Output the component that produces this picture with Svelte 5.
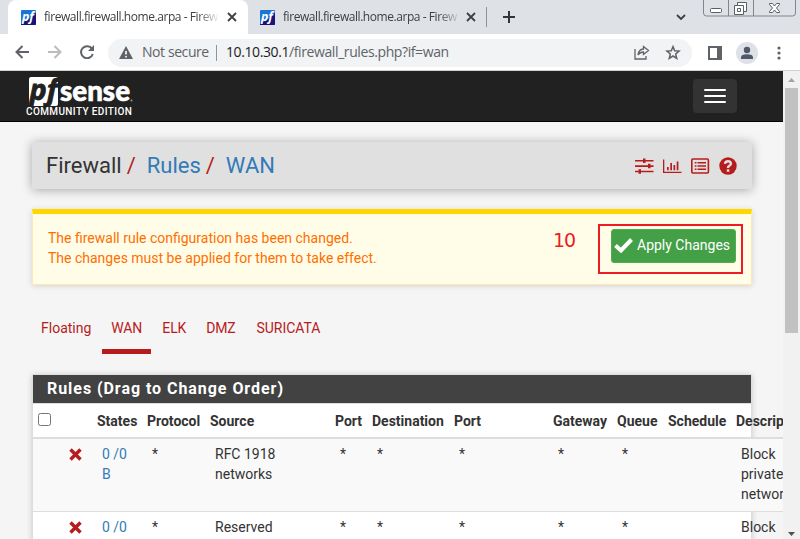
<script>
  const columns = ['', '', 'States', 'Protocol', 'Source', 'Port', 'Destination', 'Port', 'Gateway', 'Queue', 'Schedule', 'Description'];
  const rows = [
    { source: 'RFC 1918 networks', description: 'Block private networks' },
    { source: 'Reserved', description: 'Block' }
  ];
  const menu = ['Floating', 'WAN', 'ELK', 'DMZ', 'SURICATA'];
</script>

{#snippet favicon()}
  <svg class="favicon" width="15" height="15" viewBox="0 0 15 15">
    <rect width="15" height="15" rx="1" fill="#1976d2" />
    <path d="M0 13 8 9 15 3V14q0 1-1 1H0z" fill="#17147b" />
    <text x="1" y="11" textLength="12" lengthAdjust="spacingAndGlyphs">pf</text>
  </svg>
{/snippet}

{#snippet cross()}
  <svg width="10" height="10" viewBox="0 0 10 10"><path d="M1 1l8 8M9 1L1 9" stroke="currentColor" stroke-width="1.8" fill="none" /></svg>
{/snippet}

<div class="window">
  <header class="tabs">
    <div class="tab active">
      {@render favicon()}
      <span class="title">firewall.firewall.home.arpa - Firew</span>
      {@render cross()}
    </div>
    <div class="tab second">
      {@render favicon()}
      <span class="title">firewall.firewall.home.arpa - Firew</span>
      {@render cross()}
    </div>
    <i class="divider"></i>
    <svg class="plus" width="12" height="12" viewBox="0 0 12 12"><path d="M6 0v12M0 6h12" stroke="#333639" stroke-width="2" /></svg>
    <svg class="chevron" width="10" height="7" viewBox="0 0 10 7"><path d="M1 1l4 4 4-4" fill="none" stroke="#3c4043" stroke-width="1.8" /></svg>
    <svg class="controls" width="94" height="17" viewBox="0 0 94 17" fill="none" stroke="#80868b">
      <path d="M.5 0v13q0 3 3 3h86q3 0 3-3V0M25.500 0v16M50.500 0v16" />
      <g stroke="#5b5e62">
        <rect x="7.500" y="8.500" width="11" height="4" rx="1" fill="#fff" />
        <path d="M34.500 5V2.500h9v9H41M31.500 5.500h9v9h-9zM34.500 8.500h3v3h-3z" fill="#fff" />
        <path d="M66.500 3.500h3l2 2.500 2-2.500h3v1L73.500 8l3 3.500v1h-3l-2-2.500-2 2.500h-3v-1l3-3.500-3-3.500z" fill="#fff" />
      </g>
    </svg>
  </header>

  <div class="toolbar">
    <svg width="15" height="14" viewBox="0 0 15 14"><path d="M14 7H2M7.500 1l-6 6 6 6" fill="none" stroke="#5f6368" stroke-width="2" /></svg>
    <svg class="forward" width="15" height="14" viewBox="0 0 15 14"><path d="M1 7h12M7.500 1l6 6-6 6" fill="none" stroke="#babcbe" stroke-width="2" /></svg>
    <svg class="reload" width="14" height="14" viewBox="0 0 14 14"><path d="M12 3.700A6 6 0 1 0 12.800 9" fill="none" stroke="#5f6368" stroke-width="2" /><path d="M14 0v6H8z" fill="#5f6368" /></svg>
    <div class="omnibox">
      <svg width="14" height="13" viewBox="0 0 14 13"><path d="M7 0l7 13H0z" fill="#5f6368" /><path d="M6.200 5h1.600v3.600H6.200zM6.200 10h1.600v1.500H6.200z" fill="#fff" /></svg>
      <span class="secure">Not secure</span>
      <i></i>
      <span class="url"><b>10.10.30.1</b>/firewall_rules.php?if=wan</span>
      <svg class="share" width="16" height="15" viewBox="0 0 16 15" fill="none" stroke="#5f6368" stroke-width="1.300"><path d="M1 4v10h11v-3M9.500 1.500l5 4-5 4V7Q6 7 4 10q.5-5.500 5.500-6z" /></svg>
      <svg width="16" height="15" viewBox="0 0 16 15"><path d="M8 1.600l1.700 4.100 4.400.4-3.400 2.900 1 4.300L8 11l-3.700 2.300 1-4.300-3.400-2.900 4.400-.4z" fill="none" stroke="#5f6368" stroke-width="1.500" /></svg>
    </div>
    <svg class="panelicon" width="14" height="14" viewBox="0 0 14 14"><path d="M0 0h14v14H0zM2 2v10h7V2z" fill="#5f6368" fill-rule="evenodd" /></svg>
    <svg class="avatar" width="22" height="22" viewBox="0 0 22 22"><circle cx="11" cy="11" r="11" fill="#dee1e6" /><circle cx="11" cy="8" r="3.200" fill="#50586b" /><path d="M5 17v-1.500Q5 12.300 11 12.300t6 3.200V17z" fill="#50586b" /></svg>
    <svg class="dots" width="4" height="14" viewBox="0 0 4 14" fill="#5f6368"><circle cx="2" cy="2" r="1.600" /><circle cx="2" cy="7" r="1.600" /><circle cx="2" cy="12" r="1.600" /></svg>
  </div>

  <div class="viewport">
    <div class="page">
      <nav>
        <div class="brand">
          <svg width="106" height="30" viewBox="0 0 106 30">
            <path d="M4 0h25q2 0 2 2v25q0 2-2 2H4.500Q2 29 2 27V2q0-2 2-2z" fill="#fff" />
            <text class="pf" x="2.500" y="23" textLength="28" lengthAdjust="spacingAndGlyphs">pf</text>
            <text class="sense" x="33" y="23.500" textLength="70" lengthAdjust="spacingAndGlyphs">sense</text>
            <circle cx="104.500" cy="23.500" r="1" fill="#999" />
          </svg>
          <span>COMMUNITY EDITION</span>
        </div>
        <button class="menu" aria-label="Menu"><i></i><i></i><i></i></button>
      </nav>

      <main>
        <section class="crumbs">
          <h1>Firewall<em>/</em><a href="#rules">Rules</a><em>/</em><a href="#wan">WAN</a></h1>
          <div class="actions">
            <svg width="19" height="18" viewBox="0 0 19 18" fill="#b71c1c"><path d="M0 3h18.500v1.500H0zM0 8.200h18.500v1.700H0zM0 13.700h18.500v1.600H0zM8 1.500h2.500v4.500H8zM13 6.800h2.500v4.500H13zM3.500 12.200H6v4.500H3.500z" /></svg>
            <svg width="19" height="18" viewBox="0 0 19 18" fill="#b71c1c"><path d="M0 2.500h1.300v12.200H18.500V16H0zM4 10h1.700v3.300H4zM7.300 6h1.700v7.300H7.300zM10.500 8h1.700v5.300h-1.700zM13.700 4.500h1.700v8.800h-1.700z" /></svg>
            <svg width="19" height="18" viewBox="0 0 19 18"><rect x=".8" y="2" width="16.600" height="14" rx="1" fill="none" stroke="#b71c1c" stroke-width="1.600" /><path d="M3.700 5h1.800v1.500H3.700zM6.500 5H15v1.500H6.500zM3.700 8.300h1.800v1.500H3.700zM6.500 8.300H15v1.500H6.500zM3.700 11.500h1.800V13H3.700zM6.500 11.500H15V13H6.500z" fill="#b71c1c" /></svg>
            <svg width="18" height="18" viewBox="0 0 18 18"><circle cx="9" cy="9" r="8.700" fill="#b71c1c" /><path d="M5.800 6.700Q6.500 4.200 9 4.200t2.900 2.300Q11.900 8 10.300 8.800 9 9.500 9 11" fill="none" stroke="#e0e0e0" stroke-width="2.400" /><path d="M7.800 12.300h2.500v2.500H7.800z" fill="#e0e0e0" /></svg>
          </div>
        </section>

        <section class="alert">
          <p>The firewall rule configuration has been changed.<br />The changes must be applied for them to take effect.</p>
          <span class="step">10</span>
          <div class="frame">
            <button class="apply">
              <svg width="19" height="15" viewBox="0 0 19 15"><path d="M1.500 7.500l5.500 5 10.500-11" fill="none" stroke="#fff" stroke-width="4" /></svg>
              Apply Changes
            </button>
          </div>
        </section>

        <ul class="nav">
          {#each menu as item}
            <li class:current={item === 'WAN'} class:last={item === 'SURICATA'}>{item}</li>
          {/each}
        </ul>

        <section class="panel">
          <h2>Rules (Drag to Change Order)</h2>
          <table>
            <colgroup>{#each columns as _, i}<col class={'c' + i} />{/each}</colgroup>
            <thead>
              <tr>{#each columns as name, i}<th>{#if i === 0}<input type="checkbox" aria-label="Select all" />{:else}{name}{/if}</th>{/each}</tr>
            </thead>
            <tbody>
              {#each rows as row}
                <tr>
                  <td></td>
                  <td class="block"><svg width="13" height="13" viewBox="0 0 13 13"><path d="M1.500 1.500l10 10M11.500 1.500l-10 10" stroke="#b71c1c" stroke-width="3.400" /></svg></td>
                  <td><a href="#states">0 /0 B</a></td>
                  <td>*</td>
                  <td class="source">{row.source}</td>
                  <td>*</td>
                  <td>*</td>
                  <td>*</td>
                  <td>*</td>
                  <td>*</td>
                  <td></td>
                  <td>{row.description}</td>
                </tr>
              {/each}
            </tbody>
          </table>
        </section>
      </main>
    </div>
    <aside class="scrollbar">
      <svg width="7" height="4" viewBox="0 0 7 4"><path d="M3.500 0L7 4H0z" fill="#a3a3a3" /></svg>
      <i></i>
      <svg class="down" width="7" height="4" viewBox="0 0 7 4"><path d="M0 0h7L3.500 4z" fill="#505050" /></svg>
    </aside>
  </div>
</div>

<style>
  :global(body) { margin: 0; }
  .window { width: 800px; height: 539px; overflow: hidden; display: flex; flex-direction: column; background: #fff; font-family: Roboto, sans-serif; }
  .window :global(*) { box-sizing: border-box; }
  svg { flex: none; display: block; }
  a { color: #337ab7; text-decoration: none; }

  .tabs { height: 34px; flex: none; display: flex; align-items: center; background: #dee1e6; font: 12px 'Open Sans', sans-serif; color: #3c4043; }
  .tab { display: flex; align-items: center; height: 34px; }
  .tab.active { margin-left: 8px; width: 240px; padding: 0 0 0 13px; background: #fff; border-radius: 8px 8px 0 0; }
  .tab.second { width: 230px; padding-left: 12px; }
  .favicon text { font: italic bold 12px 'Open Sans', sans-serif; fill: #fff; }
  .title { width: 176px; margin: 0 7px 0 8px; letter-spacing: -0.44px; white-space: nowrap; line-height: 18px; mask-image: linear-gradient(90deg, #000 87%, transparent); }
  .second .title { width: 178px; margin-right: 5px; }
  .divider { width: 1px; height: 20px; background: #919398; margin-left: 8px; }
  .plus { margin-left: 16px; }
  .chevron { margin-left: 161px; }
  .controls { margin-left: 17px; align-self: flex-start; }

  .toolbar { height: 37px; flex: none; display: flex; align-items: center; padding: 0 0 1px 15px; border-bottom: 1px solid #cfd2d0; background: #fff; }
  .forward { margin-left: 17px; }
  .reload { margin-left: 18px; }
  .omnibox { width: 584px; height: 28px; margin: 2px 0 0 14px; border-radius: 14px; background: #f1f3f4; display: flex; align-items: center; padding: 0 11px; font: 14px/20px 'Open Sans', sans-serif; color: #5f6368; white-space: nowrap; }
  .secure { margin-left: 9px; width: 67px; letter-spacing: -0.42px; }
  .omnibox i { width: 1px; height: 16px; background: #919599; margin: 0 9px 0 7px; }
  .url { letter-spacing: -0.4px; margin-top: -1px; }
  .secure { margin-top: -1px; }
  .url b { font-weight: 400; color: #202124; }
  .share { margin: 0 15px 0 auto; }
  .panelicon { margin-left: 16px; margin-top: 2px; }
  .avatar { margin-left: 14px; margin-top: 2px; }
  .dots { margin-left: 19px; margin-top: 2px; }

  .viewport { flex: 1; min-height: 0; display: flex; }
  .page { width: 783px; overflow: hidden; background: #f5f5f5; color: #333; font-size: 14px; line-height: 20px; }
  nav { height: 51px; background: #212121; border-bottom: 1px solid #000; display: flex; justify-content: space-between; padding: 6px 46px 0 27px; }
  .brand span { display: block; margin-left: -1px; color: #fff; font: 500 10px/10px Roboto, sans-serif; letter-spacing: 0.38px; white-space: nowrap; }
  .pf { font: italic bold 28px 'Open Sans', sans-serif; fill: #212121; stroke: #212121; stroke-width: 0.8px; }
  .sense { font: 900 28px Lato, sans-serif; fill: #fff; stroke: #fff; stroke-width: 0.6px; }
  .menu { width: 44px; height: 34px; margin-top: 2px; border: 0; border-radius: 4px; background: #333; display: flex; flex-direction: column; align-items: center; justify-content: center; gap: 4px; padding: 0; }
  .menu i { width: 22px; height: 2px; background: #fff; border-radius: 1px; }

  main { padding: 20px 32px 0; }
  .crumbs { height: 47px; background: #e0e0e0; box-shadow: 0 1px 10px rgba(0, 0, 0, 0.32); display: flex; align-items: center; justify-content: space-between; padding: 0 15px; width: 720px; }
  h1 { margin: 0 0 0 -1px; font-size: 22px; font-weight: 400; line-height: 28px; }
  h1 em { font-style: normal; color: #b71c1c; margin: 0 11px 0 5px; }
  .actions { display: flex; gap: 9px; margin: 1px 0 0; }

  .alert { height: 76px; width: 720px; margin-top: 20px; background: #fffde7; border: 1px solid #ffe9b3; border-top: 5px solid #ffd600; box-shadow: 0 1px 6px rgba(0, 0, 0, 0.14); color: #ff6f00; display: flex; }
  .alert p { margin: 14px 0 0 15px; width: 505px; white-space: nowrap; }
  .step { font: 19px/24px 'DejaVu Sans', sans-serif; letter-spacing: -1px; color: #ed1c24; margin-top: 14px; width: 45px; }
  .frame { width: 145px; height: 50px; margin-top: 10px; border: 2px solid #ed1c24; padding: 3px 0 0 11px; }
  .apply { width: 125px; height: 34px; display: flex; align-items: center; gap: 4px; padding: 0 0 2px 2px; font: 14px Roboto, sans-serif; color: #fff; background: #43a047; border: 1px solid #4caf50; border-radius: 3px; white-space: nowrap; }

  .nav { list-style: none; margin: 23px 0 0; padding: 0; display: flex; color: #b71c1c; height: 46px; letter-spacing: -0.15px; }
  .nav li { padding: 10px 9px 0; margin-right: 2px; }
  .nav li:first-child { margin-right: 5px; letter-spacing: 0; }
  .nav .current { width: 49px; border-bottom: 5px solid #b71c1c; margin-left: -3px; }
  .nav .last { letter-spacing: -0.05px; padding-left: 10px; }

  .panel { width: 720px; height: 400px; margin-top: 20px; background: #fff; border: 1px solid #ddd; box-shadow: 0 1px 6px rgba(0, 0, 0, 0.18); }
  h2 { margin: 0; height: 29px; background: #424242; border-bottom: 1px solid #ddd; color: #fff; font-size: 16px; font-weight: 700; line-height: 28px; letter-spacing: 0.95px; padding-left: 14px; }
  table { width: 810px; table-layout: fixed; border-collapse: separate; border-spacing: 0; }
  th { height: 35px; padding: 0 5px; text-align: left; font-weight: 700; border-bottom: 2px solid #ddd; white-space: nowrap; }
  td { height: 73px; padding: 5px 10px 7px; vertical-align: top; border-bottom: 1px solid #ddd; }
  tbody tr:nth-child(odd) { background: #f9f9f9; }
  input { display: block; width: 13px; height: 13px; margin: 0 0 3px; }
  .block { padding: 9px 0 0 10px; }
  .source { padding-right: 40px; }
  .c0 { width: 26px; } .c1 { width: 33px; } .c2 { width: 50px; } .c3 { width: 63px; }
  .c4 { width: 125px; } .c5 { width: 37px; } .c6 { width: 82px; } .c7 { width: 99px; }
  .c8 { width: 64px; } .c9 { width: 51px; } .c10 { width: 68px; } .c11 { width: 112px; }
  td:last-child { padding-right: 40px; }

  .scrollbar { width: 17px; background: #f1f1f1; display: flex; flex-direction: column; align-items: center; padding: 7px 0 3px; }
  .scrollbar i { width: 13px; height: 245px; background: #c1c1c1; margin-top: 6px; }
  .down { margin-top: auto; }
</style>
